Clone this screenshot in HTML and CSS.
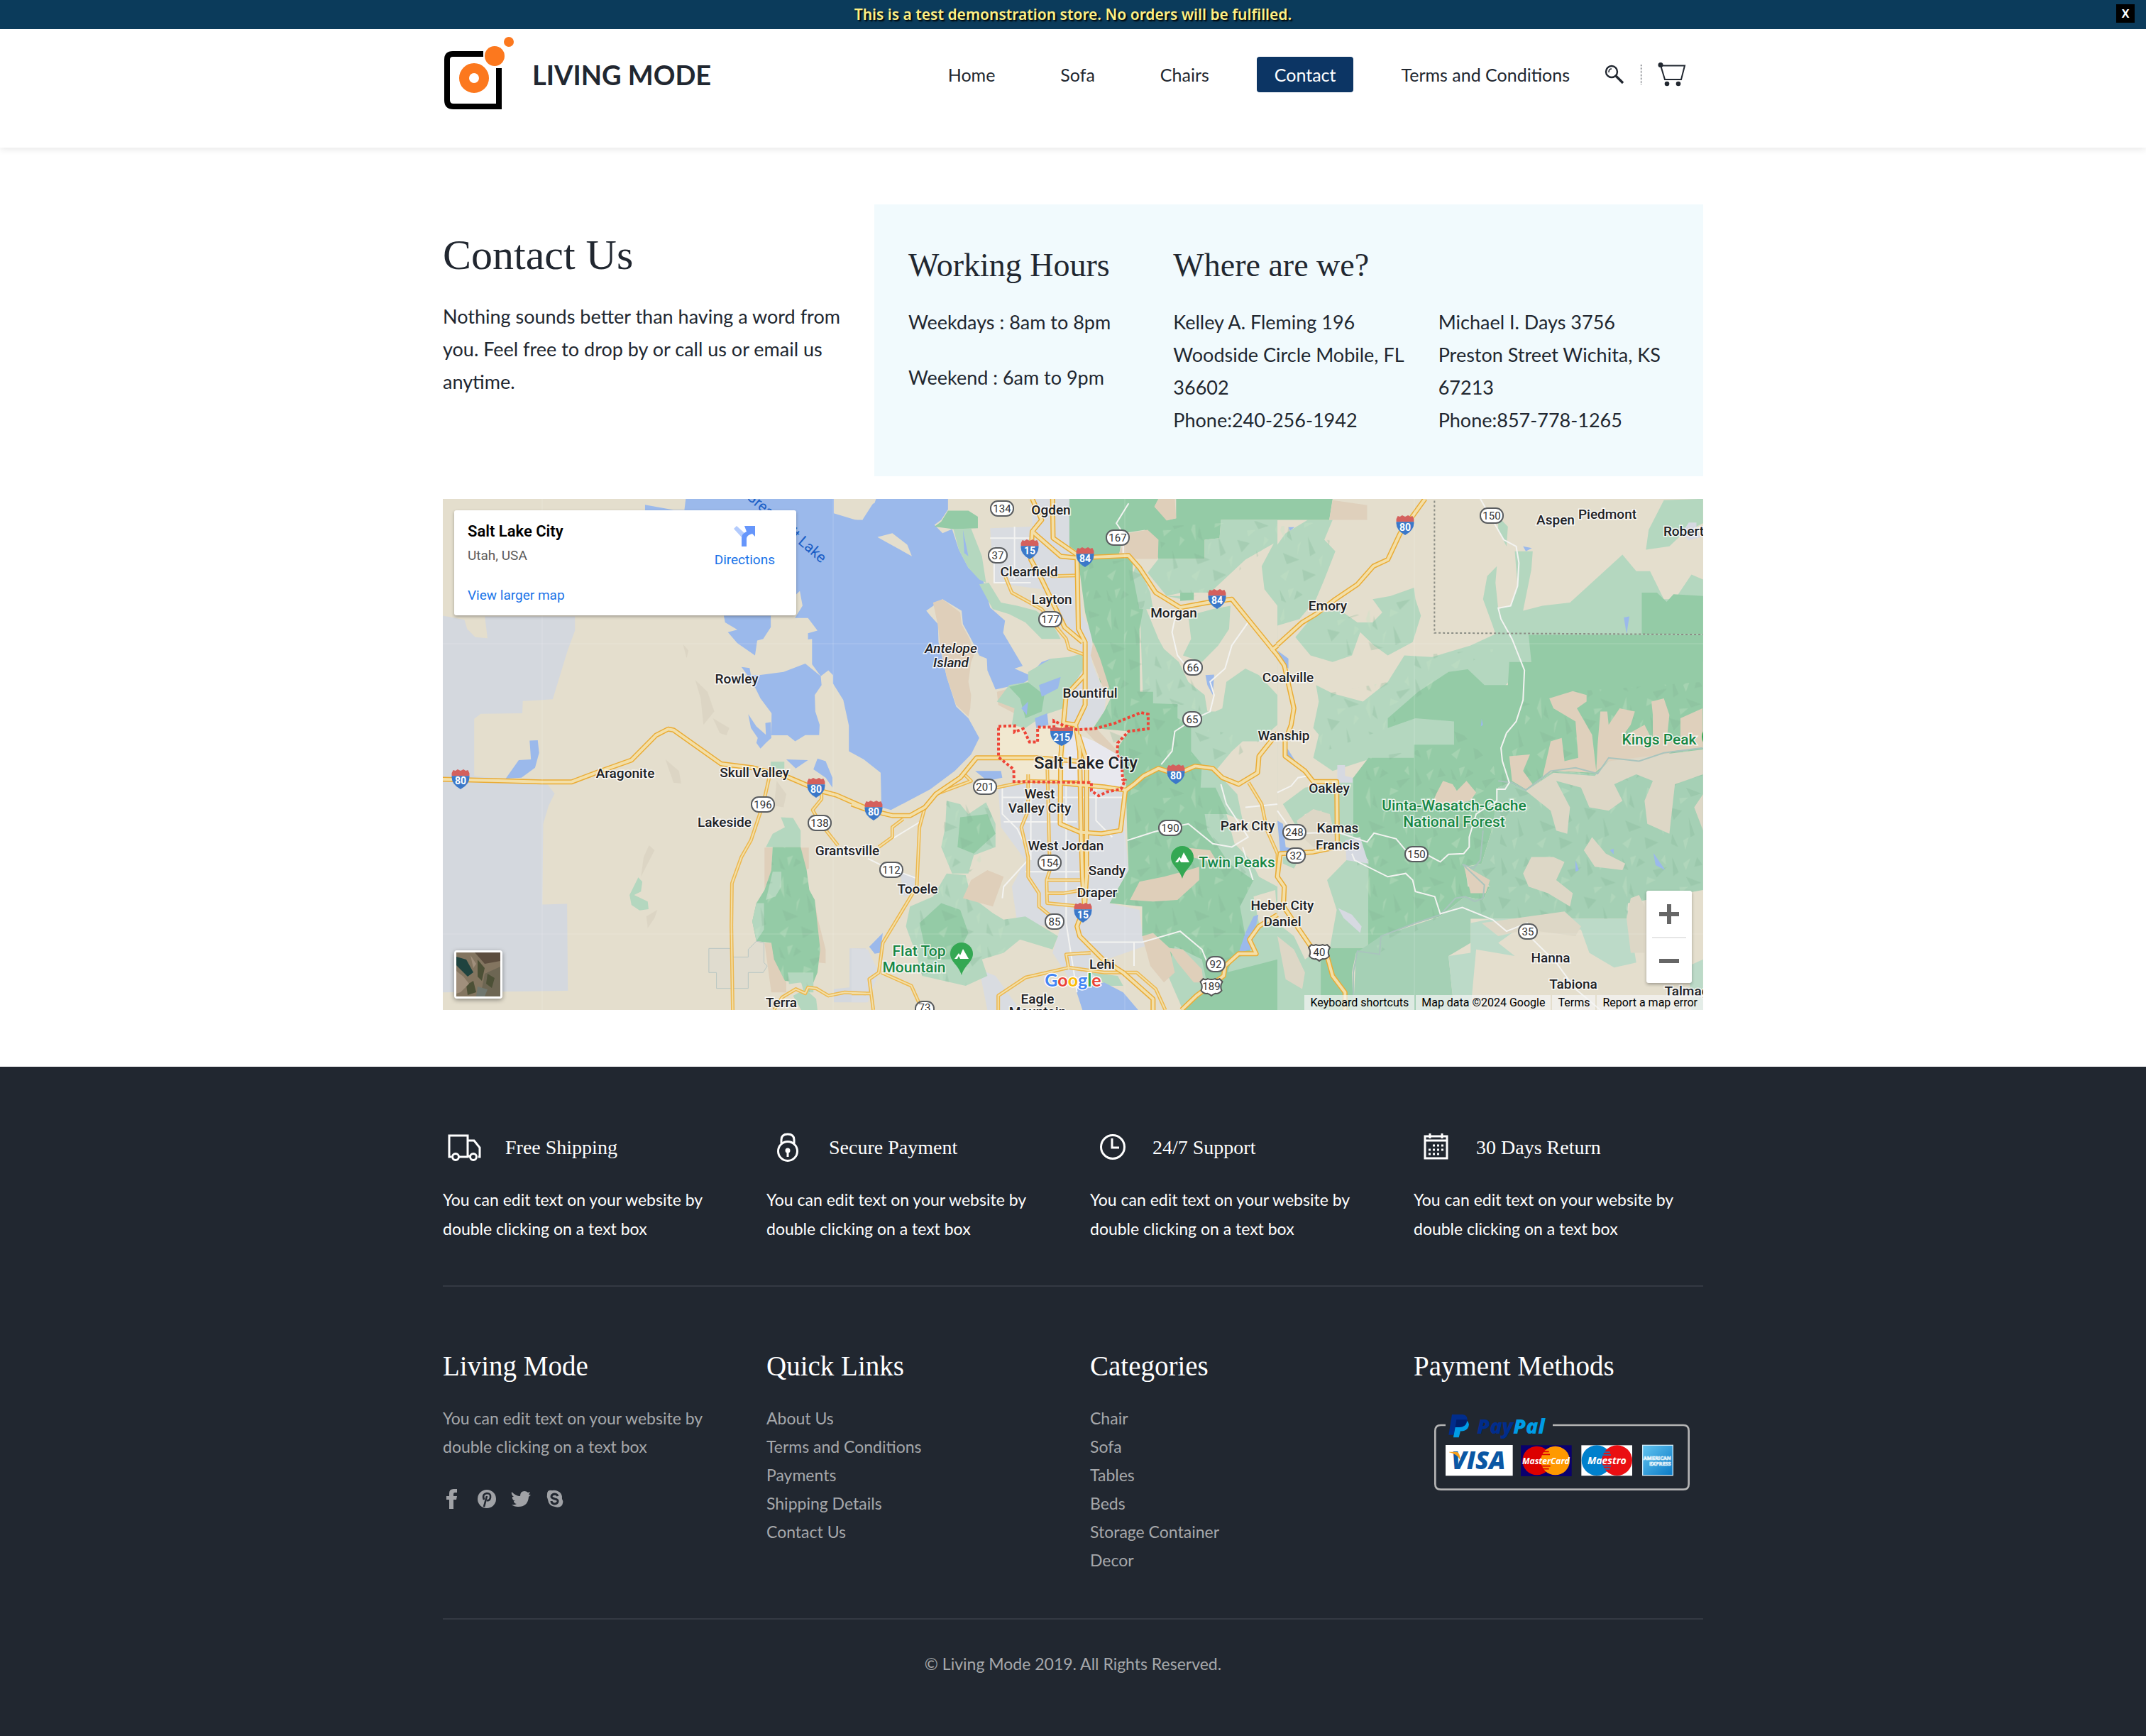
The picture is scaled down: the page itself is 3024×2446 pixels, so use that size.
FILE: index.html
```html
<!DOCTYPE html>
<html lang="en">
<head>
<meta charset="utf-8">
<meta name="viewport" content="width=device-width, initial-scale=1">
<title>Contact | Living Mode</title>
<link rel="stylesheet" href="styles.css">
</head>
<body>
<div class="notice">
  <p class="notice-text">This is a test demonstration store. No orders will be fulfilled.</p>
  <button class="notice-close" type="button">X</button>
</div>

<header class="site-header">
  <div class="container header-row">
    <a class="brand" href="#">
      <svg class="brand-mark" viewBox="0 0 100 106" aria-hidden="true">
        <path d="M57 24H14Q6 24 6 32V89Q6 98 15 98H79V44" fill="none" stroke="#000" stroke-width="8"/>
        <circle cx="44" cy="58" r="14" fill="none" stroke="#fc781e" stroke-width="14"/>
        <circle cx="73" cy="27" r="14" fill="#fc781e"/>
        <circle cx="93" cy="7" r="7" fill="#fc781e"/>
      </svg>
      <span class="brand-name">LIVING MODE</span>
    </a>
    <nav class="nav">
      <a class="nav-link" href="#">Home</a>
      <a class="nav-link" href="#">Sofa</a>
      <a class="nav-link" href="#">Chairs</a>
      <a class="nav-link is-active" href="#">Contact</a>
      <a class="nav-link" href="#">Terms and Conditions</a>
    </nav>
    <div class="tools">
      <button class="tool" type="button" aria-label="Search">
        <svg width="28" height="28" viewBox="0 0 28 28" fill="none" stroke="#212730"><circle cx="10" cy="10" r="8" stroke-width="2.4"/><path d="M6 11Q6 6 10 6" stroke-width="1.6"/><path d="M16 16L26 26" stroke-width="3.4"/></svg>
      </button>
      <span class="tool-divider"></span>
      <button class="tool" type="button" aria-label="Cart">
        <svg width="40" height="34" viewBox="0 0 40 34" fill="none" stroke="#212730"><path d="M4 4.500H38L33 24H10L4 4" stroke-width="2"/><circle cx="4" cy="3.500" r="3.500" fill="#212730" stroke="none"/><circle cx="13" cy="30" r="3.300" fill="#212730" stroke="none"/><circle cx="29" cy="30" r="3.300" fill="#212730" stroke="none"/></svg>
      </button>
    </div>
  </div>
</header>

<main class="container main">
  <section class="contact">
    <div class="intro">
      <h1 class="title">Contact Us</h1>
      <p>Nothing sounds better than having a word from you. Feel free to drop by or call us or email us anytime.</p>
    </div>
    <div class="panel">
      <h2 class="subtitle">Working Hours</h2>
      <h2 class="subtitle wide">Where are we?</h2>
      <div class="hours">
        <p>Weekdays : 8am to 8pm</p>
        <p>Weekend : 6am to 9pm</p>
      </div>
      <address class="address">Kelley A. Fleming 196<br>Woodside Circle Mobile, FL<br>36602<br>Phone:240-256-1942</address>
      <address class="address">Michael I. Days 3756<br>Preston Street Wichita, KS<br>67213<br>Phone:857-778-1265</address>
    </div>
  </section>

  <section class="map" aria-label="Map of Salt Lake City">
    <svg class="map-art" viewBox="0 0 1776 720" preserveAspectRatio="xMidYMid slice">
      <defs>
        <pattern id="relief" width="310" height="270" patternUnits="userSpaceOnUse">
          <path fill="#7fb391" fill-opacity=".28" d="M8 10L32 50 14 44ZM70 14L92 26 60 42ZM120 50L172 40 134 72ZM40 90L54 134 34 120ZM190 10L214 56 194 68ZM240 70L296 88 258 98ZM20 170L80 190 34 204ZM110 120L138 170 118 180ZM180 130L226 140 196 168ZM250 160L272 214 256 220ZM90 220L140 236 96 256ZM190 210L212 250 186 240ZM280 10L300 34 270 40Z"/>
          <path fill="#c6e2c6" fill-opacity=".35" d="M38 12L60 6 44 38ZM100 70L130 80 96 94ZM150 20L164 4 168 34ZM10 100L24 66 28 134ZM74 146L86 134 72 176ZM216 102L248 100 220 120ZM150 190L164 176 158 214ZM230 30L256 14 240 50ZM10 240L44 220 30 254ZM230 230L250 220 238 258ZM280 120L296 130 276 150Z"/>
        </pattern>
        <symbol id="interstate" viewBox="0 0 24 28"><path d="M0 5L2 1 5 2 8 0 12 2 16 0 19 2 22 1 24 5V9H0Z" fill="#d4605d"/><path d="M0 9H24Q25 20 12 27Q-1 20 0 9Z" fill="#3b78c9"/></symbol>
        <symbol id="us-route" viewBox="0 0 32 26"><path d="M5 2Q8 4 11 2Q16 4 21 2Q24 4 27 2L31 6Q27 12 30 18Q26 23 21 22Q18 23 16 25Q14 23 11 22Q6 23 2 18Q5 12 1 6Z" fill="#fff" stroke="#555" stroke-width="2"/></symbol>
        <symbol id="peak" viewBox="0 0 32 46"><path d="M16 0A16 16 0 0 1 32 16C32 27 20 32 16 46C12 32 0 27 0 16A16 16 0 0 1 16 0Z" fill="#34a853"/><path d="M6 23L12 15 14 18 18 9 26 23H14L12 19 10 23Z" fill="#fff"/></symbol>
        <g id="west-roads" transform="matrix(.3827 0 0 .4655 -4 -3)">
          <path d="M0 855L240 860 375 863H485L575 835 705 797 795 722 840 703 860 706 1035 808 1150 820 1280 848 1400 890 1460 903 1568 942"/>
        </g>
        <g id="west-lanes" transform="matrix(.3827 0 0 .4655 -4 -3)">
          <path d="M1212 850L1190 930 1145 1040 1110 1090 1075 1170 1073 1300 1078 1553"/>
          <path d="M1405 900V915L1372 948 1398 985 1465 1055"/>
          <path d="M1230 1553L1260 1515 1310 1490 1345 1503 1355 1485 1385 1488 1430 1510 1490 1500 1568 1503"/>
        </g>
        <g id="city-roads" transform="matrix(.3827 0 0 .4655 576 -3)">
          <path d="M0 930L50 945 150 965H215L270 940 310 900 400 850 460 790H680L830 800"/>
          <path d="M760 865L845 872 930 878 1010 888 1040 870 1075 845 1130 822 1195 840 1265 815 1330 822 1365 850 1425 870 1495 835 1500 785 1568 715"/>
          <path d="M740 6L742 125 830 175 835 400 860 440V630L825 690 840 770 845 1010 850 1150 858 1240 830 1300 840 1330 925 1400 1000 1440 1110 1520V1553"/>
          <path d="M835 720L865 800V1150L858 1240"/>
          <path d="M665 6L700 70 665 105 660 190 700 250 785 395 850 440"/>
          <path d="M665 105L770 180 830 185 1020 178 1060 215 1120 290 1210 335 1310 320 1400 310 1568 480"/>
          <path d="M858 540L790 600 780 690 770 790 768 990 840 1015 920 1020 990 1010 1008 890"/>
          <path d="M780 685L825 690"/>
          <path d="M1215 1553L1270 1510 1370 1450 1375 1420 1425 1383H1490L1465 1340 1500 1300 1568 1265"/>
          <path d="M1568 450L1545 465"/>
        </g>
        <g id="city-lanes" transform="matrix(.3827 0 0 .4655 576 -3)">
          <path d="M270 940L250 1000 240 1180 115 1350 100 1440 65 1460 80 1553"/>
          <path d="M190 975L150 1000V1030L100 1060M415 840L440 860 310 900M535 880L650 860 880 865"/>
          <path d="M720 800L725 960 730 1130 718 1160 720 1230 850 1240M718 1160H850M720 1200H780L850 1190"/>
          <path d="M650 840V950L625 1000 650 1090V1150L690 1200V1240L750 1280"/>
          <path d="M565 240L590 290 700 340 790 430 800 460 858 478M660 215L740 240 830 238"/>
          <path d="M110 1440L220 1480 260 1553M0 1503H70M540 1553V1510L640 1455 800 1425 930 1440H1050L1120 1490 1155 1553"/>
          <path d="M800 1430L790 1385 880 1380M1462 865L1510 930 1530 1010 1568 1080V1140"/>
        </g>
        <g id="east-roads" transform="matrix(.389 0 0 .4655 1176 -3)">
          <path d="M535 6L445 110 400 190 348 210 290 265 210 310 140 355 90 380 0 448"/>
          <path d="M0 480L25 510 60 640 50 690 28 740V785L100 830 130 862H215L217 1050"/>
          <path d="M217 1060L130 1075 10 1080 0 1150 25 1180 22 1240 120 1360 180 1390 200 1450 245 1500V1553"/>
        </g>
      </defs>
      <rect width="1776" height="720" fill="#e4decd"/>

      <g transform="matrix(.3827 0 0 .4655 -4 -3)">
        <path fill="#d4d8de" d="M10 360L90 372 100 400 130 425 175 428 165 362H497V405L470 465 415 613 305 618 303 655 150 657 126 672V845L240 855 395 870 422 898 400 935 380 990 377 1234 468 1232 471 1495 10 1500ZM1508 1367H1568V1530H1450V1490L1508 1485Z"/>
        <path fill="#9bb9eb" d="M755 24L860 40 900 40 905 6H1450V50L1530 70 1568 75V778L1535 745 1540 705 1520 700 1505 690 1485 615 1447 565V540L1430 525 1402 543 1370 507V430L1355 432V413L1390 405 1355 367H1307L1335 330 1325 285 1305 300 1200 200 755 200Z"/>
        <path fill="#9bb9eb" d="M1110 515L1140 518 1145 540H1175L1265 530 1345 505 1402 543 1405 570 1380 600 1382 650 1398 690 1396 721H1345L1308 740 1280 722H1220L1221 655 1180 610 1150 560ZM1045 360H1218V395L1190 430 1168 435 1160 480 1095 443 1060 410 1095 402 1050 380ZM1135 658L1165 695 1200 720 1198 685 1218 682 1220 730 1200 745 1180 762 1165 745 1170 730 1145 700ZM1275 795L1355 797 1310 822ZM1390 792L1420 800 1445 850V880L1420 850 1375 825ZM330 738L360 737 365 775 350 820 300 850 242 853 290 797 335 795Z"/>
        <path fill="#dfcfba" d="M1195 1062H1225L1220 1130 1195 1190ZM1195 1350H1220L1275 1470V1500H1220ZM1325 1062H1358V1125L1345 1130ZM1380 1230L1392 1280 1420 1370V1412L1395 1410Z"/>
        <path fill="#b4d7bf" d="M1255 970L1300 972 1328 1010V1060L1200 1060 1225 1020 1270 1000ZM1300 1510L1345 1490 1385 1520 1390 1553H1330ZM730 1152L745 1165 740 1195 715 1205 765 1225 768 1248 735 1252 705 1235 698 1205ZM1218 802H1268V825L1218 820Z"/>
        <path fill="#94cba6" d="M1225 1060H1328L1350 1130 1360 1190 1380 1220 1400 1370 1390 1440 1360 1500 1330 1470 1270 1465 1230 1400 1220 1350 1165 1345 1150 1285 1165 1230 1195 1190 1220 1130Z"/>
        <path fill="#b4d7bf" d="M1225 1135H1257V1180L1235 1210 1200 1220ZM1165 1230H1193V1310L1165 1345 1150 1285ZM1280 1440H1375V1500H1340L1330 1470 1285 1475Z"/>
        <path d="M1225 1060H1328L1350 1130 1360 1190 1380 1220 1400 1370 1390 1440 1360 1500 1330 1470 1270 1465 1230 1400 1220 1350 1165 1345 1150 1285 1165 1230 1195 1190 1220 1130Z" fill="url(#relief)"/>
        <path fill="#e0dccf" stroke="#b8c6c3" d="M990 1367H1070L1080 1393H1135V1370L1165 1345 1193 1350V1410L1205 1420 1190 1440H1135V1488H1018V1440H990Z"/>
        <path fill="#d8d1c0" d="M895 447L915 465 908 488ZM940 555L985 590 1010 650 970 690 960 610ZM1005 670L1065 700 1055 722 1030 715ZM830 795L880 830 888 868 860 865ZM770 1055L790 1070 740 1150 750 1090ZM800 1250L790 1275 765 1305 760 1270ZM1240 860L1275 900 1265 940 1230 935Z" fill-opacity=".7"/>
      </g>

      <g transform="matrix(.3827 0 0 .4655 576 -3)">
        <path fill="#d9dce1" d="M510 95L665 90V6H802V150L840 165V260L850 360 885 410V500L920 575 940 590 930 650 890 695 830 705 780 690 800 600 850 500 840 440 740 330 700 280 525 260ZM540 880L640 870 1010 880 1005 1000 1020 1130 950 1230 1060 1250 1070 1320 1080 1360 940 1400 850 1340 740 1300 610 1290 590 1180 640 1100 550 1000ZM1250 725L1330 730 1400 780 1385 820 1250 790ZM180 1140L250 1150 240 1200 190 1210ZM0 1367L60 1370 100 1440 60 1530 0 1530ZM470 1430L530 1450 620 1553H500ZM770 1300L850 1340 900 1420 880 1500 820 1480 740 1380Z"/>
        <path fill="#9bb9eb" d="M-60 70H40L50 35 85 18 90 6H355V38L330 70 305 85 335 110 370 98 395 160 430 215 485 255 510 335 565 375 558 412 630 512 600 520 655 540 700 500 735 490 690 535 630 565 530 583 500 525 498 490 470 480 440 430 410 385 405 345 335 310 275 345 290 360 318 385 320 440 335 490 350 545 385 635 430 670 470 730 440 780 380 830 290 885 145 948 110 940 107 835 45 795 -10 770V70Z"/>
        <path fill="#e4decd" d="M95 122L150 110 205 145 222 180ZM-5 6H90L40 70 0 62Z"/>
        <path fill="#dfcfba" d="M300 320L335 310 400 350 405 385 435 430 450 480 440 500 430 560 440 600 437 640 430 665 385 630 350 545 325 440 318 390ZM535 590L580 580 620 610 610 660 540 630ZM850 700H900L980 770 985 800 920 760Z"/>
        <path fill="#b4d7bf" d="M375 98L440 96 480 180 495 260 470 250 430 215 395 160ZM470 265L505 260 550 320 610 330 680 345 740 385 770 430 700 430 640 380 580 355 520 340ZM650 530L735 490 800 485 850 475 855 520 800 590 780 640 710 660 640 700 590 690 600 640 535 620 580 570 650 560ZM350 920L400 930 430 960 495 925 530 990V1060L450 1085 430 1140H370L330 1060 345 1000ZM350 1140L420 1145 440 1210 520 1260 560 1280 640 1270 760 1330 740 1370 620 1340 560 1380 480 1400 500 1450 420 1480 260 1450 240 1390 200 1300 215 1240 300 1210ZM880 1440L980 1450 1000 1480 940 1480Z"/>
        <path fill="#94cba6" d="M330 75L355 42 430 42 465 60V95L375 98 305 90ZM580 575L650 562 710 600 700 650 640 670 620 610ZM400 970L500 960 530 1020 450 1080 390 1060ZM250 1290L330 1230 400 1250 430 1320 380 1400 280 1400Z"/>
        <path fill="#b4d7bf" d="M1060 300H1568V1553H1220L1160 1440 1100 1250Z"/>
        <path fill="#e4decd" d="M1568 130L1450 190 1320 290 1215 310 1160 300 1090 250 1090 340 1070 310 1130 430 1150 460 1205 500 1240 560 1300 600 1310 650H1340L1365 640 1380 560 1450 520 1500 540 1568 600 1568 330 1510 230ZM1500 740L1568 690V1180L1500 1150 1470 1100 1410 1050 1380 960 1440 980 1420 900 1340 830 1400 770 1440 740ZM1560 1190L1568 1280 1500 1290 1480 1210Z"/>
        <path fill="#94cba6" d="M802 6H1130L1115 30 1165 70 1195 65V6H1568V70H1360L1355 125 1300 130V188H1130L1080 100 1000 110 985 175 1035 180V235L1090 270 1060 400 1062 590H1110V625L1200 628V670L1250 690V770L1290 810 1285 880 1340 880 1385 960 1300 960 1310 1010 1350 1060 1390 1110 1480 1160 1430 1240 1450 1330 1470 1380 1400 1400 1380 1450 1310 1480 1290 1400 1190 1360 1160 1440 1100 1330H1070V1240L950 1230 1020 1130 1015 1020 1010 870 995 810 980 760 1020 710 890 700 930 650 960 600 915 560 885 430 860 350 830 165 802 150ZM1210 290H1260V312L1210 315ZM1380 1440L1568 1400V1553H1220Z"/>
        <path fill="#b4d7bf" d="M1360 70H1568V135L1450 190 1320 290H1215L1160 300 1090 230 1130 188H1300V130L1355 125ZM1240 360L1330 340 1395 330 1390 400 1350 450 1290 500 1220 480 1250 430ZM1050 200L1100 290 1110 340 1060 340 1035 235ZM1510 210L1568 120V330L1520 280Z"/>
        <path fill="url(#relief)" d="M850 200L1035 190 1090 270 1060 400 1062 590 1200 628 1250 770 1290 880 1385 960 1310 1010 1480 1160 1430 1240 1450 1330 1400 1400 1290 1400 1190 1360 1100 1330 1070 1240 950 1230 1020 1130 1010 870 980 760 890 700 960 600 885 430ZM350 920L400 930 495 925 530 990V1060L430 1140 440 1210 560 1280 640 1270 560 1380 480 1400 420 1480 260 1450 200 1300 300 1210 370 1140 330 1060ZM1060 400L1200 500 1300 600 1290 650 1062 590ZM1250 690L1500 740 1340 830ZM1130 90L1568 70V135L1320 290 1160 290Z"/>
        <path fill="#dfcfba" d="M1115 30L1130 6H1190L1195 65 1160 72ZM1020 110L1090 100 1130 130 1128 188H1050L985 170ZM890 440L915 490 950 580 925 575 880 480ZM1025 1220L1060 1165 1150 1150 1240 1130 1280 1120V1160L1200 1220 1110 1225ZM1230 1062L1320 1070 1350 1110 1250 1090ZM1070 1330L1110 1320 1170 1365 1190 1440 1150 1470 1100 1420ZM1165 1365L1220 1370 1290 1430 1295 1470 1260 1470 1200 1410ZM440 1160L500 1130 560 1150 520 1240 410 1215Z"/>
        <path fill="#9bb9eb" d="M825 1490L930 1470 1000 1500 1055 1553H850ZM1480 1270L1498 1265 1470 1370 1425 1380 1450 1320ZM65 1362L115 1320 105 1380 85 1383ZM455 830H550L555 850 500 860ZM690 570L770 545 760 580 700 605ZM625 640L650 620 645 660ZM675 670L720 655 725 690 680 700ZM410 100L430 180 415 170ZM1303 540L1335 538 1330 600 1310 570Z"/>
        <path fill="#f1e8d0" d="M541 695L600 693 632 702 655 742H685V697H745L775 690 830 705 850 760 860 865H598L597 825 541 788Z"/>
        <path fill="#e8e8ee" d="M790 705L895 740 978 780 995 810 998 855 992 885 883 890V865H780Z"/>
        <path class="local" d="M525 150V260H660M510 125H660M600 90V250M555 880V960L610 1005 660 1090 560 1180 555 1215M790 865V1290L830 1500M560 984H830M660 860V1100M900 880V980L960 1030M555 910H1000M640 1135H850M1015 1040L1110 1015 1180 1000 1240 990 1330 1050 1400 1060 1460 1030 1380 930 1360 870M1440 1060L1478 1160M1020 20L975 80 1000 110V170M1190 370L1180 410 1200 480 1240 520M1460 380L1400 450 1375 520 1320 560 1335 600 1320 650 1255 675 1190 710 1180 770 1140 810M850 1348H1070L1210 1315 1290 1370 1310 1410M1040 1350V1420M250 985L150 1035M60 1095L110 1115 240 1155M1450 940L1568 930"/>
      </g>

      <g transform="matrix(.389 0 0 .4655 1176 -3)">
        <path fill="#b4d7bf" d="M0 145L30 110 110 70H200L170 130 210 165 170 250 140 310 80 370 0 390ZM65 425L140 350 230 345 290 380H345L380 350 345 310 410 300 495 275 500 310 520 360 490 440 400 480 350 450 300 410 270 480 200 500 120 480ZM140 570L200 595 310 620 400 560 460 480 560 485 700 450 790 415 780 390 745 310 760 240 795 210 790 260 800 340 845 330 870 270 860 165H925L920 220 890 345 960 330 1060 320 1250 175 1300 225H1350L1400 310H1440L1500 235 1542 250V500H900L640 750 490 800 330 795 200 830 130 790 150 720 130 700 150 620ZM1335 160L1345 100 1400 10 1542 6V80L1470 110 1420 150ZM800 60L835 90 830 150 800 100ZM20 930L100 880 215 865 275 850V1060L170 1040 160 950 100 960 70 1000ZM180 1160L250 1100H330L328 1366H190L215 1250ZM0 1290L60 1330 100 1400 157 1366V1553H0ZM20 1090L90 1080 60 1125 20 1110Z"/>
        <path fill="#94cba6" d="M0 6H200L188 70H0ZM1320 290H1375L1410 318 1435 295 1542 300V415H1320ZM910 418H1542V790L1200 800 1150 840 1000 830 900 890 840 865 800 880 780 1000 740 1110 680 1120 690 1180 770 1180 745 1220 680 1210 590 1270 500 1290 375 1330 370 1380H285L270 1440 275 1553H157V1366H328L330 1100 275 1050V850L330 790H495V750H640V680L500 670 400 700V670L510 590 620 530 690 522 750 570H835L840 500H920Z"/>
        <path fill="#a5d0b5" d="M840 865L900 890 1000 830 1150 840 1200 800 1542 770V1190L1270 1230 1265 1277H700V1350L620 1390 640 1553H275L285 1380 375 1330 590 1270 680 1210 745 1220 770 1180 690 1120 740 1110 780 1000 800 880Z"/>
        <path fill="#bcdac8" d="M700 1290L780 1277H1265V1230L1300 1410 1220 1425 1130 1380 1100 1310 900 1290 800 1350 860 1390 720 1370 700 1553H640L620 1390 700 1380ZM1490 1420L1542 1400V1553H1500Z"/>
        <path fill="url(#relief)" d="M0 90L200 70 170 250 0 390ZM330 790L640 750 640 690 840 865 780 1000 740 1110 770 1180 590 1270 370 1380 330 1300 275 1050ZM900 600L1542 560V1190L1265 1277H700L800 880ZM120 400L500 300 480 440 200 490ZM150 600L400 560 500 480 800 460 620 530 400 700 140 780Z"/>
        <path fill="#dfd0bc" d="M200 10L325 25V70H188ZM985 610L1070 588 1120 600V620L1085 640 1140 720 1155 830 1160 750 1170 650H1195L1200 690 1240 640 1295 650 1280 690 1245 730 1330 690 1360 740V660L1355 620 1400 610 1420 660 1410 740H1460V670L1540 640 1542 760 1430 770 1400 790 1200 800 1150 835 1000 830 960 850 990 740 1030 730 1040 800 1090 790 1080 680 1000 640ZM840 785L915 780 890 830 925 870 900 885 850 860ZM575 900L600 860 635 870 650 890 685 860 720 895 700 920 640 930H560ZM675 1115L770 1160 755 1200H700Z"/>
        <path fill="#ddd7c6" d="M900 890L1000 835 1150 845 1200 800 1542 765V840L1440 870 1420 1020 1340 990 1330 920 1360 860 1300 840 1220 870 1250 920 1200 950 1130 940 1100 880 1010 860 1060 940 1050 1020 1010 1010 990 950ZM890 1140L920 1090H1000L1040 1105 1010 1160 1070 1200 1060 1240 980 1200 910 1180ZM1110 1070L1140 1030 1190 1080 1260 1110 1250 1130 1150 1120ZM1510 940L1542 900V1010ZM0 1330L60 1370 100 1440 90 1490 30 1460ZM1265 1277L1280 1215 1310 1205 1330 1240V1380L1280 1380ZM70 980L130 945 190 960 215 1050 130 1060 90 1030ZM740 1290L1040 1255 1100 1300 1080 1330 900 1310 800 1330Z"/>
        <path fill="#9bb9eb" d="M0 465L40 490 40 520 25 510ZM35 760L65 800 50 805 35 790ZM0 980L20 990 30 1060 80 1070 10 1075ZM890 150L922 155 900 165ZM1255 365L1275 362 1265 415ZM740 672L745 690 737 695ZM1080 1100L1092 1130 1080 1135ZM1362 1078L1405 1130 1370 1115ZM1205 1070L1218 1065 1218 1082ZM40 92L62 92 45 103Z"/>
        <path fill="#d6d9e1" d="M217 812H245V845L272 850V865H217ZM220 1245L270 1265 305 1300 300 1320 240 1275ZM245 1040L300 1030 330 1110 250 1100ZM1490 78H1518V110L1542 120 1490 132 1465 110Z"/>
        <path class="river" d="M800 860L850 865 900 888 990 830 1080 820 1160 838 1200 790 1310 800 1400 775 1540 760M745 1010L735 1100 710 1125 670 1112M670 1112L750 1175 745 1215 715 1225 680 1210 645 1215 590 1265 500 1290 375 1330 370 1385 290 1375 275 1440V1553"/>
        <path class="local" d="M735 6L820 130 865 150 875 200 870 270 845 330 800 337 810 370 850 430 895 525 890 615 865 680 830 715 810 760 815 800 840 865 825 885H795V920L720 960 695 1030V1060L675 1080 620 1082 590 1105 545 1085 465 1070 430 1035 350 1018 325 1045 217 1015 100 1018M270 1080L280 1100 400 1150 465 1140 490 1160 500 1195 570 1210 590 1262 670 1243 780 1280 830 1315 905 1290 925 1340 1010 1410 1080 1490 1170 1553M0 895L50 875 75 850 110 845M0 950L50 1010"/>
        <path class="state-line" d="M569 12V412L1542 417"/>
      </g>

      <use href="#west-lanes" class="lane-edge"/><use href="#city-lanes" class="lane-edge"/>
      <use href="#west-lanes" class="lane-fill"/><use href="#city-lanes" class="lane-fill"/>
      <use href="#west-roads" class="road-edge"/><use href="#city-roads" class="road-edge"/><use href="#east-roads" class="road-edge"/>
      <use href="#west-roads" class="road-fill"/><use href="#city-roads" class="road-fill"/><use href="#east-roads" class="road-fill"/>
      <path class="seam" d="M140 0V720M550 0V720M961 0V720M1369 0V720M0 204H1776M0 613H1776"/>
      <g transform="matrix(.3827 0 0 .4655 576 -3)"><path class="city-limit" d="M541 695L600 693V712L632 702 655 742H685V697H745V678L775 690 830 705 895 702 970 685 1065 653 1092 658V702L1020 710 980 745 978 780 995 810 998 855 1007 858 992 885 940 893 910 905 883 890V865L598 862 597 825 541 788Z"/></g>

      <g class="shields">
        <use href="#interstate" x="12" y="381" width="26" height="29"/><text x="25" y="397">80</text>
        <use href="#interstate" x="513" y="393" width="26" height="29"/><text x="526" y="409">80</text>
        <use href="#interstate" x="594" y="425" width="26" height="29"/><text x="607" y="441">80</text>
        <use href="#interstate" x="814" y="57" width="26" height="29"/><text x="827" y="73">15</text>
        <use href="#interstate" x="892" y="68" width="26" height="29"/><text x="905" y="84">84</text>
        <use href="#interstate" x="1078" y="127" width="26" height="29"/><text x="1091" y="143">84</text>
        <use href="#interstate" x="1020" y="374" width="26" height="29"/><text x="1033" y="390">80</text>
        <use href="#interstate" x="889" y="569" width="26" height="29"/><text x="902" y="586">15</text>
        <use href="#interstate" x="1343" y="23" width="26" height="29"/><text x="1356" y="40">80</text>
        <path d="M856 323L862 321 872 323 882 321 888 323V327H856Z" fill="#d4605d"/><path d="M856 327H888Q888 342 872 348Q856 342 856 327Z" fill="#3b78c9"/><text x="872" y="336">215</text>
      </g>
      <g class="routes">
        <rect x="435" y="420" width="32" height="21" rx="10"/><text x="451" y="431">196</text>
        <rect x="515" y="446" width="32" height="21" rx="10"/><text x="531" y="457">138</text>
        <rect x="772" y="3" width="32" height="21" rx="10"/><text x="788" y="14">134</text>
        <rect x="769" y="69" width="26" height="21" rx="10"/><text x="782" y="80">37</text>
        <rect x="935" y="44" width="32" height="21" rx="10"/><text x="951" y="55">167</text>
        <rect x="840" y="159" width="32" height="21" rx="10"/><text x="856" y="170">177</text>
        <rect x="1044" y="227" width="26" height="21" rx="10"/><text x="1057" y="238">66</text>
        <rect x="1043" y="300" width="26" height="21" rx="10"/><text x="1056" y="311">65</text>
        <rect x="748" y="395" width="32" height="21" rx="10"/><text x="764" y="406">201</text>
        <rect x="1009" y="453" width="32" height="21" rx="10"/><text x="1025" y="464">190</text>
        <rect x="839" y="502" width="32" height="21" rx="10"/><text x="855" y="513">154</text>
        <rect x="616" y="512" width="32" height="21" rx="10"/><text x="632" y="523">112</text>
        <rect x="849" y="585" width="26" height="21" rx="10"/><text x="862" y="596">85</text>
        <rect x="666" y="708" width="26" height="21" rx="10"/><text x="679" y="717">73</text>
        <rect x="1076" y="645" width="26" height="21" rx="10"/><text x="1089" y="656">92</text>
        <rect x="1462" y="13" width="32" height="21" rx="10"/><text x="1478" y="24">150</text>
        <rect x="1184" y="459" width="32" height="21" rx="10"/><text x="1200" y="470">248</text>
        <rect x="1189" y="492" width="26" height="21" rx="10"/><text x="1202" y="503">32</text>
        <rect x="1356" y="490" width="32" height="21" rx="10"/><text x="1372" y="501">150</text>
        <rect x="1516" y="599" width="26" height="21" rx="10"/><text x="1529" y="610">35</text>
        <use href="#us-route" x="1066" y="674" width="34" height="27"/><text x="1083" y="687">189</text>
        <use href="#us-route" x="1219" y="626" width="32" height="26"/><text x="1235" y="639">40</text>
      </g>
      <g class="places">
        <text x="414" y="253">Rowley</text><text x="257" y="386">Aragonite</text><text x="439" y="385">Skull Valley</text>
        <text x="397" y="455">Lakeside</text><text x="570" y="495">Grantsville</text><text x="477" y="709">Terra</text>
        <text x="857" y="15">Ogden</text><text x="826" y="102">Clearfield</text><text x="858" y="141">Layton</text>
        <text x="1030" y="160">Morgan</text><text x="912" y="273">Bountiful</text>
        <text x="841" y="415">West</text><text x="841" y="435">Valley City</text><text x="878" y="488">West Jordan</text>
        <text x="936" y="523">Sandy</text><text x="922" y="554">Draper</text><text x="669" y="549">Tooele</text>
        <text x="929" y="655">Lehi</text><text x="838" y="704">Eagle</text><text x="838" y="722">Mountain</text>
        <text x="1134" y="460">Park City</text><text x="1568" y="29">Aspen</text><text x="1641" y="21">Piedmont</text>
        <text x="1764" y="45">Robertson</text><text x="1247" y="150">Emory</text><text x="1191" y="251">Coalville</text>
        <text x="1185" y="333">Wanship</text><text x="1249" y="407">Oakley</text><text x="1261" y="463">Kamas</text>
        <text x="1261" y="487">Francis</text><text x="1183" y="572">Heber City</text><text x="1183" y="595">Daniel</text>
        <text x="1561" y="646">Hanna</text><text x="1593" y="683">Tabiona</text><text x="1758" y="693">Talmage</text>
        <g class="italic"><text x="716" y="210">Antelope</text><text x="716" y="230">Island</text></g>
        <text class="city" x="906" y="372">Salt Lake City</text>
      </g>
      <use href="#peak" x="1026" y="489" width="32" height="46"/><use href="#peak" x="715" y="625" width="32" height="46"/>
      <circle cx="1790" cy="335" r="16" fill="#34a853"/>
      <g class="parks">
        <text x="1119" y="512">Twin Peaks</text><text x="671" y="637">Flat Top</text><text x="664" y="660">Mountain</text>
        <text x="1425" y="432">Uinta-Wasatch-Cache</text><text x="1425" y="455">National Forest</text><text x="1714" y="339">Kings Peak</text>
      </g>
      <text class="water-name" transform="translate(431 -7) rotate(41)">Great Salt Lake</text>
      <text class="google" x="888" y="677"><tspan fill="#4285f4">G</tspan><tspan fill="#ea4335">o</tspan><tspan fill="#fbbc05">o</tspan><tspan fill="#4285f4">g</tspan><tspan fill="#34a853">l</tspan><tspan fill="#ea4335">e</tspan></text>
    </svg>

    <div class="place-card">
      <div class="place-text">
        <strong class="place-name">Salt Lake City</strong>
        <span class="place-region">Utah, USA</span>
        <a class="map-link" href="#">View larger map</a>
      </div>
      <a class="directions" href="#">
        <svg width="32" height="30" viewBox="0 0 32 30" aria-hidden="true"><path d="M1 5L5 1 17 12 12 17Z" fill="#b3cbfd"/><path d="M12 30V18Q12 12 19 9L16 1H31V16L27 12Q19 14 19 19V30Z" fill="#6696fb"/></svg>
        Directions
      </a>
    </div>
    <button class="satellite" type="button" aria-label="Show satellite imagery">
      <svg viewBox="0 0 62 62" aria-hidden="true"><rect width="62" height="62" fill="#6d6653"/><path d="M0 0H30L62 0V20L40 30 34 62H0Z" fill="#837560"/><path d="M0 6L14 10 24 28 16 34 0 18Z" fill="#1f433f"/><path d="M30 10L40 22 36 40 30 34ZM44 30L54 36 50 50 42 44ZM14 46L24 40 28 56 16 60Z" fill="#4c5036"/><path d="M0 26L10 34 18 44 6 56 0 58ZM20 4L28 16 24 22Z" fill="#a08f7c"/><path d="M26 0L62 0 62 12 40 16Z" fill="#5c4d3e"/><path d="M30 48L44 52 40 62H28Z" fill="#70776f"/></svg>
    </button>
    <div class="zoom">
      <button class="zoom-btn" type="button" aria-label="Zoom in"><svg width="28" height="28" viewBox="0 0 28 28"><path d="M11 0H17V11H28V17H17V28H11V17H0V11H11Z" fill="#666"/></svg></button>
      <button class="zoom-btn" type="button" aria-label="Zoom out"><svg width="28" height="28" viewBox="0 0 28 28"><path d="M0 11H28V17H0Z" fill="#666"/></svg></button>
    </div>
    <div class="map-credits">
      <button class="credit" type="button">Keyboard shortcuts</button>
      <span class="credit">Map data ©2024 Google</span>
      <a class="credit" href="#">Terms</a>
      <a class="credit" href="#">Report a map error</a>
    </div>
  </section>
</main>

<footer class="footer">
  <div class="container">
    <div class="columns features">
      <section>
        <h3 class="feature-title"><svg viewBox="0 0 60 48" width="60" height="48" fill="none" stroke="#fff" stroke-width="3"><path d="M12 37H9V7H35V37H22M35 14H44L52 24V37H50M35 36H38"/><circle cx="18" cy="37" r="4.500"/><circle cx="43" cy="37" r="4.500"/></svg>Free Shipping</h3>
        <p>You can edit text on your website by double clicking on a text box</p>
      </section>
      <section>
        <h3 class="feature-title"><svg viewBox="0 0 60 48" width="60" height="48" fill="none" stroke="#fff" stroke-width="3"><circle cx="30" cy="29" r="13.500"/><path d="M21 18V13Q21 5 30 5Q39 5 39 13V18M30 29V37"/><circle cx="30" cy="28" r="2" fill="#fff"/></svg>Secure Payment</h3>
        <p>You can edit text on your website by double clicking on a text box</p>
      </section>
      <section>
        <h3 class="feature-title"><svg viewBox="0 0 60 48" width="60" height="48" fill="none" stroke="#fff" stroke-width="3"><circle cx="32" cy="23" r="16.500"/><path d="M31 11V24H41"/></svg>24/7 Support</h3>
        <p>You can edit text on your website by double clicking on a text box</p>
      </section>
      <section>
        <h3 class="feature-title"><svg viewBox="0 0 60 48" width="60" height="48" fill="none" stroke="#fff" stroke-width="3"><path d="M16 8H47V39H16ZM16 14H47M23 4V11M40 4V11"/><path d="M27 21H44M21 27H44M21 33H38" stroke-dasharray="3 3"/></svg>30 Days Return</h3>
        <p>You can edit text on your website by double clicking on a text box</p>
      </section>
    </div>
    <div class="columns directory">
      <section>
        <h3 class="footer-title">Living Mode</h3>
        <p>You can edit text on your website by double clicking on a text box</p>
        <div class="social">
          <a href="#" aria-label="Facebook"><svg width="28" height="30" viewBox="0 0 28 30"><path d="M9 29V16H5V11H9V7Q9 1 15 1H20V6H17Q15 6 15 8V11H20L19 16H15V29Z"/></svg></a>
          <a href="#" aria-label="Pinterest"><svg width="28" height="30" viewBox="0 0 28 30"><circle cx="14" cy="15" r="13"/><path d="M10 16Q7 8 14 7Q20 7 19 13Q18 18 14 17M14 11L10 26" fill="none" stroke="#212730" stroke-width="2.600"/></svg></a>
          <a href="#" aria-label="Twitter"><svg width="28" height="30" viewBox="0 0 28 30"><path d="M1 5Q7 11 13 11Q13 4 19 4Q22 4 24 6L27 5 25 9 28 9 25 12Q24 26 10 26Q4 26 1 23Q5 24 8 22Q4 21 4 18H6Q1 16 2 12L4 12Q0 9 1 5Z"/></svg></a>
          <a href="#" aria-label="Skype"><svg width="28" height="30" viewBox="0 0 28 30"><path d="M3 8Q3 2 10 3Q14 2 18 4Q25 7 24 15Q27 20 23 25Q19 28 14 26Q5 25 4 16Q2 12 3 8Z"/><path d="M18 11Q17 8 13 8Q9 9 9 12Q10 14 14 15Q19 16 18 19Q17 22 13 22Q9 21 9 18" fill="none" stroke="#212730" stroke-width="3"/></svg></a>
        </div>
      </section>
      <section>
        <h3 class="footer-title">Quick Links</h3>
        <ul class="links"><li><a href="#">About Us</a></li><li><a href="#">Terms and Conditions</a></li><li><a href="#">Payments</a></li><li><a href="#">Shipping Details</a></li><li><a href="#">Contact Us</a></li></ul>
      </section>
      <section>
        <h3 class="footer-title">Categories</h3>
        <ul class="links"><li><a href="#">Chair</a></li><li><a href="#">Sofa</a></li><li><a href="#">Tables</a></li><li><a href="#">Beds</a></li><li><a href="#">Storage Container</a></li><li><a href="#">Decor</a></li></ul>
      </section>
      <section>
        <h3 class="footer-title">Payment Methods</h3>
        <svg class="payments" viewBox="183 340 1080 330" role="img" aria-label="Accepted payment methods">
          <defs><linearGradient id="amex" x2="1" y2="1"><stop stop-color="#62c4f0"/><stop offset="1" stop-color="#0a7ac6"/></linearGradient></defs>
          <path d="M231 391H211Q187 391 187 415V640Q187 663 211 663H1236Q1259 663 1259 640V415Q1259 391 1236 391H684" fill="none" stroke="#b4b4b4" stroke-width="8"/>
          <path d="M274 368H312Q336 378 328 398Q320 418 294 416L287 443H264Z" fill="#009ce6"/>
          <path d="M258 346H304Q328 350 322 376Q316 402 284 400H272L266 432H244Z" fill="#012d8c"/>
          <path d="M277 368H321Q318 402 284 400H272Z" fill="#001e6a"/>
          <text class="paypal" x="364" y="428"><tspan fill="#012d8c">Pay</tspan><tspan fill="#009ce6">Pal</tspan></text>
          <rect x="231" y="475" width="284" height="130" fill="#fff"/>
          <text class="visa" x="370" y="578">VISA</text>
          <path d="M246 504H276Q288 506 290 518L294 540Q280 512 246 506Z" fill="#f8a01b"/>
          <rect x="549" y="476" width="215" height="131" fill="#0a006e"/>
          <circle cx="617" cy="541" r="61" fill="#dc0000"/><circle cx="695" cy="541" r="61" fill="#ff9900"/>
          <path d="M640 503H668M638 515H672M636 564H674M640 576H668" stroke="#dc0000" stroke-width="5"/>
          <text class="card-name" x="655" y="556">MasterCard</text>
          <rect x="805" y="476" width="215" height="129" fill="#fff"/>
          <circle cx="870" cy="540" r="64" fill="#0080cc"/><circle cx="956" cy="540" r="64" fill="#ea0e12"/>
          <path d="M900 505H926M896 517H930M896 564H930M900 576H926" stroke="#0080cc" stroke-width="5"/>
          <text class="card-name maestro" x="913" y="556">Maestro</text>
          <rect x="1064" y="476" width="128" height="127" fill="url(#amex)" stroke="#cfeaf8" stroke-width="4"/>
          <text class="amex" x="1126" y="538">AMERICAN</text><text class="amex" x="1138" y="562">EXPRESS</text>
        </svg>
      </section>
    </div>
    <p class="copyright">© Living Mode 2019. All Rights Reserved.</p>
  </div>
</footer>
</body>
</html>
```
FILE: styles.css
```css
* { box-sizing: border-box; }
body {
  margin: 0;
  background: #fff;
  color: #212730;
  font-family: Lato, "Open Sans", sans-serif;
  font-size: 27px;
  line-height: 46px;
}
p, h1, h2, h3, ul { margin: 0; padding: 0; }
h1, h2, h3 { font-family: "Liberation Serif", serif; font-weight: 400; }
a { color: inherit; text-decoration: none; }
button { margin: 0; padding: 0; border: 0; background: none; font: inherit; color: inherit; cursor: pointer; }
svg { display: block; }
.container { width: 100%; max-width: 1776px; margin: 0 auto; }

/* Store notice */
.notice { position: relative; padding: 0 48px; background: #0b3b5b; text-align: center; }
.notice-text {
  font-family: "Noto Sans", sans-serif;
  font-size: 21px;
  font-weight: 600;
  line-height: 41px;
  color: #fff085;
  text-shadow: 2px 2px 2px #000;
}
.notice-close {
  position: absolute;
  top: 6px;
  right: 16px;
  width: 26px;
  height: 26px;
  background: #000;
  color: #fff;
  font-family: "Open Sans", sans-serif;
  font-size: 16px;
  font-weight: 700;
  line-height: 26px;
}

/* Header */
.site-header { padding: 11px 0 50px; box-shadow: 0 2px 10px rgba(0, 0, 0, .1); }
.header-row { display: flex; align-items: center; }
.brand { display: flex; align-items: center; gap: 26px; }
.brand-mark { width: 100px; height: 106px; }
.brand-name { font-size: 38px; font-weight: 700; }
.nav { display: flex; gap: 42px; margin-left: auto; font-size: 25px; }
.nav-link { padding: 0 25px; line-height: 50px; border-radius: 4px; }
.nav-link.is-active { background: #0c3564; color: #fff; }
.tools { display: flex; align-items: center; gap: 23px; padding: 0 24px; }
.tool-divider { height: 28px; border-left: 1px dotted #212730; }

/* Contact details */
.main { padding: 80px 0; }
.contact { display: grid; grid-template-columns: 560fr 1168fr; gap: 48px; margin-bottom: 32px; }
.intro { padding-top: 35px; }
.title { margin-bottom: 28px; font-size: 60px; line-height: 72px; }
.panel {
  display: grid;
  grid-template-columns: repeat(3, 1fr);
  row-gap: 27px;
  padding: 56px 0 56px 48px;
  background: #f1fafd;
}
.subtitle { font-size: 46px; line-height: 60px; }
.subtitle.wide { grid-column: span 2; }
.hours { display: grid; align-content: start; gap: 32px; }
.address { font-style: normal; }

/* Map */
.map { position: relative; overflow: hidden; font-family: Roboto, sans-serif; }
.map-art { width: 100%; height: 720px; }
.map-art path { vector-effect: non-scaling-stroke; }
.map-art text { text-anchor: middle; dominant-baseline: central; }
.map-art use { fill: none; stroke-linejoin: round; }
.road-edge { stroke: #eaac35; stroke-width: 7px; }
.road-fill { stroke: #f3dfa8; stroke-width: 4px; }
.lane-edge { stroke: #ecb850; stroke-width: 5px; }
.lane-fill { stroke: #f3dfa8; stroke-width: 2px; }
.local { fill: none; stroke: #f3f3f1; stroke-width: 2px; }
.river { fill: none; stroke: #a9c4bd; stroke-width: 2px; }
.seam { fill: none; stroke: #fff; stroke-opacity: .2; stroke-width: 1px; }
.state-line { fill: none; stroke: #8b8d85; stroke-width: 2px; stroke-dasharray: 3 3; }
.city-limit { fill: none; stroke: #ee4437; stroke-width: 4px; stroke-dasharray: 4 3; }
.shields text { fill: #fff; font-size: 14px; font-weight: 700; }
.routes rect { fill: #fff; stroke: #5a5d60; stroke-width: 2px; }
.routes text { fill: #333; font-size: 15px; }
.places text { fill: #202124; stroke: #fff; stroke-width: 3px; stroke-opacity: .8; paint-order: stroke; font-size: 19px; font-weight: 500; }
.places .italic text { font-style: italic; }
.places .city { font-size: 24px; font-weight: 500; }
.parks text { fill: #188744; stroke: #fff; stroke-width: 3px; stroke-opacity: .8; paint-order: stroke; font-size: 21px; font-weight: 500; }
.map-art .water-name { fill: #1b5fc6; font-size: 21px; text-anchor: start; }
.map-art .google { font-family: Lato, sans-serif; font-size: 25px; font-weight: 700; stroke: #fff; stroke-width: 3px; paint-order: stroke; }
.place-card {
  position: absolute;
  top: 16px;
  left: 16px;
  display: flex;
  justify-content: space-between;
  width: 482px;
  height: 148px;
  padding: 16px 30px 16px 19px;
  border-radius: 3px;
  background: #fff;
  box-shadow: 0 2px 4px rgba(0, 0, 0, .3);
}
.place-text { display: grid; align-content: start; line-height: 28px; font-size: 19px; }
.place-name { color: #000; font-size: 22px; font-weight: 600; }
.place-region { margin: 6px 0 28px; color: #5b5b5b; }
.map-link { color: #1a73e8; }
.directions { display: flex; flex-direction: column; align-items: center; gap: 5px; padding-top: 5px; color: #1a73e8; font-size: 19px; line-height: 28px; }
.satellite { position: absolute; left: 16px; bottom: 16px; width: 68px; height: 68px; border: 3px solid #fff; border-radius: 4px; box-shadow: 0 2px 6px rgba(0, 0, 0, .4); }
.zoom { position: absolute; right: 16px; bottom: 38px; width: 64px; padding: 0 8px; border-radius: 3px; background: #fff; box-shadow: 0 2px 4px rgba(0, 0, 0, .3); }
.zoom-btn { display: grid; place-items: center; width: 100%; height: 65px; }
.zoom-btn + .zoom-btn { border-top: 2px solid #e6e6e6; }
.map-credits { position: absolute; right: 0; bottom: 0; display: flex; gap: 2px; color: #000; font-size: 16px; line-height: 21px; }
.credit { padding: 0 8px; background: rgba(245, 245, 245, .7); }

/* Footer */
.footer { min-height: 943px; padding: 80px 0; background: #212730; color: #fff; font-size: 23px; line-height: 41px; }
.columns { display: grid; grid-template-columns: repeat(4, 1fr); gap: 48px; border-bottom: 2px solid #343943; }
.features { padding-bottom: 59px; }
.feature-title { display: flex; align-items: center; gap: 28px; margin-bottom: 25px; padding-top: 6px; font-size: 28px; line-height: 56px; }
.feature-title svg { flex: none; }
.directory { padding: 84px 0 62px; color: #a6a8ab; line-height: 40px; }
.footer-title { margin-bottom: 25px; color: #fff; font-size: 39px; line-height: 56px; }
.social { display: flex; gap: 20px; margin-top: 39px; }
.social svg { fill: #a0a2a6; }
.links { list-style: none; }
.payments { width: 360px; height: 110px; margin-left: 29px; margin-top: 38px; }
.paypal { font-family: "Open Sans", sans-serif; font-size: 86px; font-weight: 800; font-style: italic; }
.visa { fill: #0a57a4; font-family: "Open Sans", sans-serif; font-size: 104px; font-weight: 800; font-style: italic; text-anchor: middle; }
.card-name { fill: #fff; font-family: "Open Sans", sans-serif; font-size: 36px; font-weight: 700; font-style: italic; text-anchor: middle; }
.maestro { font-size: 42px; }
.amex { fill: none; stroke: #fff; stroke-width: 2px; font-family: "Open Sans", sans-serif; font-size: 22px; font-weight: 700; text-anchor: middle; }
.copyright { padding-top: 42px; color: #a6a8ab; text-align: center; }
```
